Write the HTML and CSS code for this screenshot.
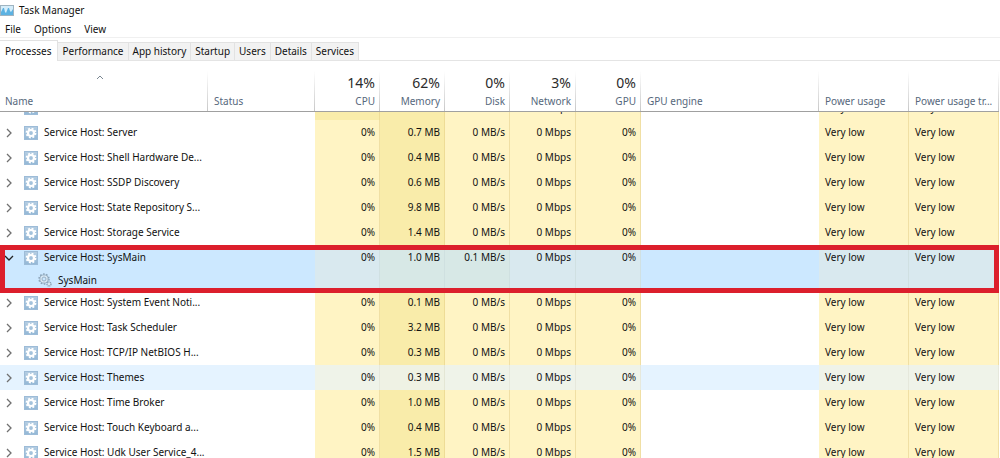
FILE: index.html
```html
<!DOCTYPE html>
<html lang="en">
<head>
<meta charset="utf-8">
<title>Task Manager</title>
<link rel="stylesheet" href="styles.css">
</head>
<body>
<svg class="defs" aria-hidden="true">
  <defs>
    <linearGradient id="tile" x1="0" y1="0" x2="0" y2="1"><stop offset="0" stop-color="#b4cde2"/><stop offset="1" stop-color="#94b8d6"/></linearGradient>
    <symbol id="service" viewBox="0 0 14 14">
      <rect width="14" height="14" fill="#9dbcd8"/>
      <rect x="1" y="1" width="12" height="12" fill="url(#tile)"/>
      <circle cx="7" cy="7" r="4.5" fill="none" stroke="#fff" stroke-width="1.8" stroke-dasharray="1.9 1.634"/>
      <circle cx="7" cy="7" r="3" fill="none" stroke="#fff" stroke-width="2.2"/>
    </symbol>
    <symbol id="gears" viewBox="0 0 14 14">
      <circle cx="6" cy="6" r="5" fill="none" stroke="#8ba3b7" stroke-width="1.4" stroke-dasharray="1.6 1.54"/>
      <circle cx="6" cy="6" r="4.1" fill="#d9e9f5" stroke="#8ba3b7" stroke-width=".8"/>
      <circle cx="6" cy="6" r="2" fill="#cce8ff" stroke="#8ba3b7" stroke-width=".8"/>
      <circle cx="11" cy="11" r="2" fill="#d9e9f5" stroke="#8ba3b7" stroke-width="1.4" stroke-dasharray="1 .57"/>
    </symbol>
    <symbol id="chevron" viewBox="0 0 8 10"><path d="M2 1l4 4-4 4" fill="none" stroke="currentColor" stroke-width="1.3"/></symbol>
  </defs>
</svg>
<header class="titlebar">
  <svg class="logo" viewBox="0 0 14 11" aria-hidden="true">
    <rect x=".5" y=".5" width="13" height="10" fill="#d5edfa" stroke="#9fb4c1"/>
    <path d="M1 7l2-4 1 0 1 4 1 1 2-5 1 0 1 3 1 1 2-3v6H1z" fill="#5cb2e2"/>
  </svg>
  <h1>Task Manager</h1>
</header>
<nav class="menu"><button>File</button><button>Options</button><button>View</button></nav>
<div class="tabs" role="tablist">
  <button class="tab active" role="tab" aria-selected="true">Processes</button>
  <button class="tab" role="tab">Performance</button>
  <button class="tab" role="tab">App history</button>
  <button class="tab" role="tab">Startup</button>
  <button class="tab" role="tab">Users</button>
  <button class="tab" role="tab">Details</button>
  <button class="tab" role="tab">Services</button>
</div>
<main>
<table class="grid">
  <colgroup><col class="c-name"><col class="c-status"><col class="c-num"><col class="c-num"><col class="c-num"><col class="c-net"><col class="c-num"><col><col class="c-power"><col class="c-power"></colgroup>
  <thead>
    <tr>
      <th><div class="sort"><svg viewBox="0 0 8 5" aria-hidden="true"><path d="M1 4l3-3 3 3" fill="none" stroke="#7a8791"/></svg></div>Name</th>
      <th>Status</th>
      <th class="num"><strong>14%</strong>CPU</th>
      <th class="num"><strong>62%</strong>Memory</th>
      <th class="num"><strong>0%</strong>Disk</th>
      <th class="num"><strong>3%</strong>Network</th>
      <th class="num"><strong>0%</strong>GPU</th>
      <th>GPU engine</th><th>Power usage</th><th>Power usage tr...</th>
    </tr>
  </thead>
  <tbody>
    <tr class="clipped"><td><div><span class="name"><svg class="icon"><use href="#service"/></svg></span></div></td><td></td><td class="num mid"></td><td class="num mid"></td><td class="num low"><div>0 MB/s</div></td><td class="num low"><div>0 Mbps</div></td><td class="num low"></td><td></td><td class="low"><div>Very low</div></td><td class="low"><div>Very low</div></td></tr>
    <tr><td><div class="name"><button aria-label="Expand"><svg><use href="#chevron"/></svg></button><svg class="icon"><use href="#service"/></svg>Service Host: Server</div></td><td></td><td class="num low">0%</td><td class="num mid">0.7 MB</td><td class="num low">0 MB/s</td><td class="num low">0 Mbps</td><td class="num low">0%</td><td></td><td class="low">Very low</td><td class="low">Very low</td></tr>
    <tr><td><div class="name"><button aria-label="Expand"><svg><use href="#chevron"/></svg></button><svg class="icon"><use href="#service"/></svg>Service Host: Shell Hardware De...</div></td><td></td><td class="num low">0%</td><td class="num mid">0.4 MB</td><td class="num low">0 MB/s</td><td class="num low">0 Mbps</td><td class="num low">0%</td><td></td><td class="low">Very low</td><td class="low">Very low</td></tr>
    <tr><td><div class="name"><button aria-label="Expand"><svg><use href="#chevron"/></svg></button><svg class="icon"><use href="#service"/></svg>Service Host: SSDP Discovery</div></td><td></td><td class="num low">0%</td><td class="num mid">0.6 MB</td><td class="num low">0 MB/s</td><td class="num low">0 Mbps</td><td class="num low">0%</td><td></td><td class="low">Very low</td><td class="low">Very low</td></tr>
    <tr><td><div class="name"><button aria-label="Expand"><svg><use href="#chevron"/></svg></button><svg class="icon"><use href="#service"/></svg>Service Host: State Repository S...</div></td><td></td><td class="num low">0%</td><td class="num mid">9.8 MB</td><td class="num low">0 MB/s</td><td class="num low">0 Mbps</td><td class="num low">0%</td><td></td><td class="low">Very low</td><td class="low">Very low</td></tr>
    <tr><td><div class="name"><button aria-label="Expand"><svg><use href="#chevron"/></svg></button><svg class="icon"><use href="#service"/></svg>Service Host: Storage Service</div></td><td></td><td class="num low">0%</td><td class="num mid">1.4 MB</td><td class="num low">0 MB/s</td><td class="num low">0 Mbps</td><td class="num low">0%</td><td></td><td class="low">Very low</td><td class="low">Very low</td></tr>
  </tbody>
  <tbody class="selected">
    <tr><td><div class="name"><button class="open" aria-label="Collapse" aria-expanded="true"><svg><use href="#chevron"/></svg></button><svg class="icon"><use href="#service"/></svg>Service Host: SysMain</div></td><td></td><td class="num low">0%</td><td class="num mid">1.0 MB</td><td class="num mid">0.1 MB/s</td><td class="num low">0 Mbps</td><td class="num low">0%</td><td></td><td class="low">Very low</td><td class="low">Very low</td></tr>
    <tr class="child"><td><div class="name"><svg class="icon"><use href="#gears"/></svg>SysMain</div></td><td></td><td class="low"></td><td class="mid"></td><td class="mid"></td><td class="low"></td><td class="low"></td><td></td><td class="low"></td><td class="low"></td></tr>
  </tbody>
  <tbody>
    <tr><td><div class="name"><button aria-label="Expand"><svg><use href="#chevron"/></svg></button><svg class="icon"><use href="#service"/></svg>Service Host: System Event Noti...</div></td><td></td><td class="num low">0%</td><td class="num mid">0.1 MB</td><td class="num low">0 MB/s</td><td class="num low">0 Mbps</td><td class="num low">0%</td><td></td><td class="low">Very low</td><td class="low">Very low</td></tr>
    <tr><td><div class="name"><button aria-label="Expand"><svg><use href="#chevron"/></svg></button><svg class="icon"><use href="#service"/></svg>Service Host: Task Scheduler</div></td><td></td><td class="num low">0%</td><td class="num mid">3.2 MB</td><td class="num low">0 MB/s</td><td class="num low">0 Mbps</td><td class="num low">0%</td><td></td><td class="low">Very low</td><td class="low">Very low</td></tr>
    <tr><td><div class="name"><button aria-label="Expand"><svg><use href="#chevron"/></svg></button><svg class="icon"><use href="#service"/></svg>Service Host: TCP/IP NetBIOS H...</div></td><td></td><td class="num low">0%</td><td class="num mid">0.3 MB</td><td class="num low">0 MB/s</td><td class="num low">0 Mbps</td><td class="num low">0%</td><td></td><td class="low">Very low</td><td class="low">Very low</td></tr>
    <tr class="hover"><td><div class="name"><button aria-label="Expand"><svg><use href="#chevron"/></svg></button><svg class="icon"><use href="#service"/></svg>Service Host: Themes</div></td><td></td><td class="num low">0%</td><td class="num mid">0.3 MB</td><td class="num low">0 MB/s</td><td class="num low">0 Mbps</td><td class="num low">0%</td><td></td><td class="low">Very low</td><td class="low">Very low</td></tr>
    <tr><td><div class="name"><button aria-label="Expand"><svg><use href="#chevron"/></svg></button><svg class="icon"><use href="#service"/></svg>Service Host: Time Broker</div></td><td></td><td class="num low">0%</td><td class="num mid">1.0 MB</td><td class="num low">0 MB/s</td><td class="num low">0 Mbps</td><td class="num low">0%</td><td></td><td class="low">Very low</td><td class="low">Very low</td></tr>
    <tr><td><div class="name"><button aria-label="Expand"><svg><use href="#chevron"/></svg></button><svg class="icon"><use href="#service"/></svg>Service Host: Touch Keyboard a...</div></td><td></td><td class="num low">0%</td><td class="num mid">0.4 MB</td><td class="num low">0 MB/s</td><td class="num low">0 Mbps</td><td class="num low">0%</td><td></td><td class="low">Very low</td><td class="low">Very low</td></tr>
    <tr><td><div class="name"><button aria-label="Expand"><svg><use href="#chevron"/></svg></button><svg class="icon"><use href="#service"/></svg>Service Host: Udk User Service_4...</div></td><td></td><td class="num low">0%</td><td class="num mid">1.5 MB</td><td class="num low">0 MB/s</td><td class="num low">0 Mbps</td><td class="num low">0%</td><td></td><td class="low">Very low</td><td class="low">Very low</td></tr>
  </tbody>
</table>
</main>
</body>
</html>
```

FILE: styles.css
```css
* { box-sizing: border-box; }
body {
  margin: 0;
  height: 100vh;
  overflow: hidden;
  display: flex;
  flex-direction: column;
  background: #fff;
  color: #111;
  font: 10px/20px "Noto Sans", "Open Sans", sans-serif;
}
button { margin: 0; padding: 0; border: 0; background: none; color: inherit; font: inherit; }
.defs { position: absolute; width: 0; height: 0; }
.titlebar { display: flex; align-items: center; gap: 5px; height: 20px; flex: none; }
.titlebar h1 { margin: 0; font-size: 10px; font-weight: 400; }
.logo { width: 14px; height: 11px; }
.menu { display: flex; gap: 13px; height: 18px; padding-left: 5px; flex: none; border-bottom: 1px solid #f0f0f0; line-height: 18px; }
.tabs { display: flex; align-items: flex-end; height: 23px; flex: none; border-bottom: 1px solid #e4e4e4; }
.tab { height: 18px; padding: 0 4px; line-height: 17px; background: #f2f2f2; border: 1px solid #e2e2e2; border-width: 1px 1px 0 0; }
.tab.active { height: 21px; margin-bottom: -1px; padding: 0 6px 0 5px; line-height: 18px; background: #fff; }
main { flex: 1; min-height: 0; overflow: hidden; padding: 10px 1px 0 0; }

.grid { width: 100%; table-layout: fixed; border-collapse: separate; border-spacing: 0; }
.c-name { width: 208px; }
.c-status { width: 107px; }
.c-num { width: 65px; }
.c-net { width: 66px; }
.c-power { width: 90px; }
th {
  height: 41px;
  padding: 0 5px 0 6px;
  vertical-align: bottom;
  text-align: left;
  font-weight: 400;
  line-height: 20px;
  color: #56687c;
  white-space: nowrap;
  border-bottom: 1px solid #a0a0a0;
  background: linear-gradient(#fff, #c8c8c8) right / 1px 100% no-repeat;
}
th strong { display: block; font-size: 14px; font-weight: 400; line-height: 17px; color: #2b2b2b; }
.sort { display: flex; justify-content: center; }
.sort svg { width: 8px; height: 5px; margin: 0 8px 11px 0; }
td { height: 25px; padding: 0 4px 0 6px; line-height: 25px; white-space: nowrap; }
th:first-child, td:first-child { padding-left: 5px; }
.num { text-align: right; }
.low { background: #fff4c4; border-right: 1px solid #f0dfa4; }
.mid { background: #f9ecaa; border-right: 1px solid #eedc96; }
.name { display: flex; align-items: center; height: 25px; }
.name button { display: flex; flex: none; width: 19px; color: #707070; }
.name button svg { width: 8px; height: 10px; }
.name .open { color: #222; }
.open svg { transform: rotate(90deg); }
.icon { width: 14px; height: 14px; margin-right: 6px; flex: none; }

.clipped td { height: 8px; line-height: 8px; }
.clipped td > div { display: flex; align-items: flex-end; height: 8px; overflow: hidden; line-height: 25px; }
.clipped .num > div { justify-content: flex-end; }
.clipped .name { padding-left: 19px; }

.selected { position: relative; }
.selected td { background: #cce8ff; }
.selected .low { background: #d9e9ef; border-color: #d0e0e2; }
.selected .mid { background: #d7e8e6; border-color: #cfe0e0; }
.selected::after { content: ""; position: absolute; inset: 0 0 -3px 0; border: 5px solid #dc1f2c; pointer-events: none; }
.child td { height: 20px; line-height: 20px; }
.child .name { height: 20px; padding-left: 33px; }
.hover td { background: #e5f3ff; }
.hover .low { background: #eff3e9; border-color: #e6e8dc; }
.hover .mid { background: #eff2e4; border-color: #e4e6d4; }
```
